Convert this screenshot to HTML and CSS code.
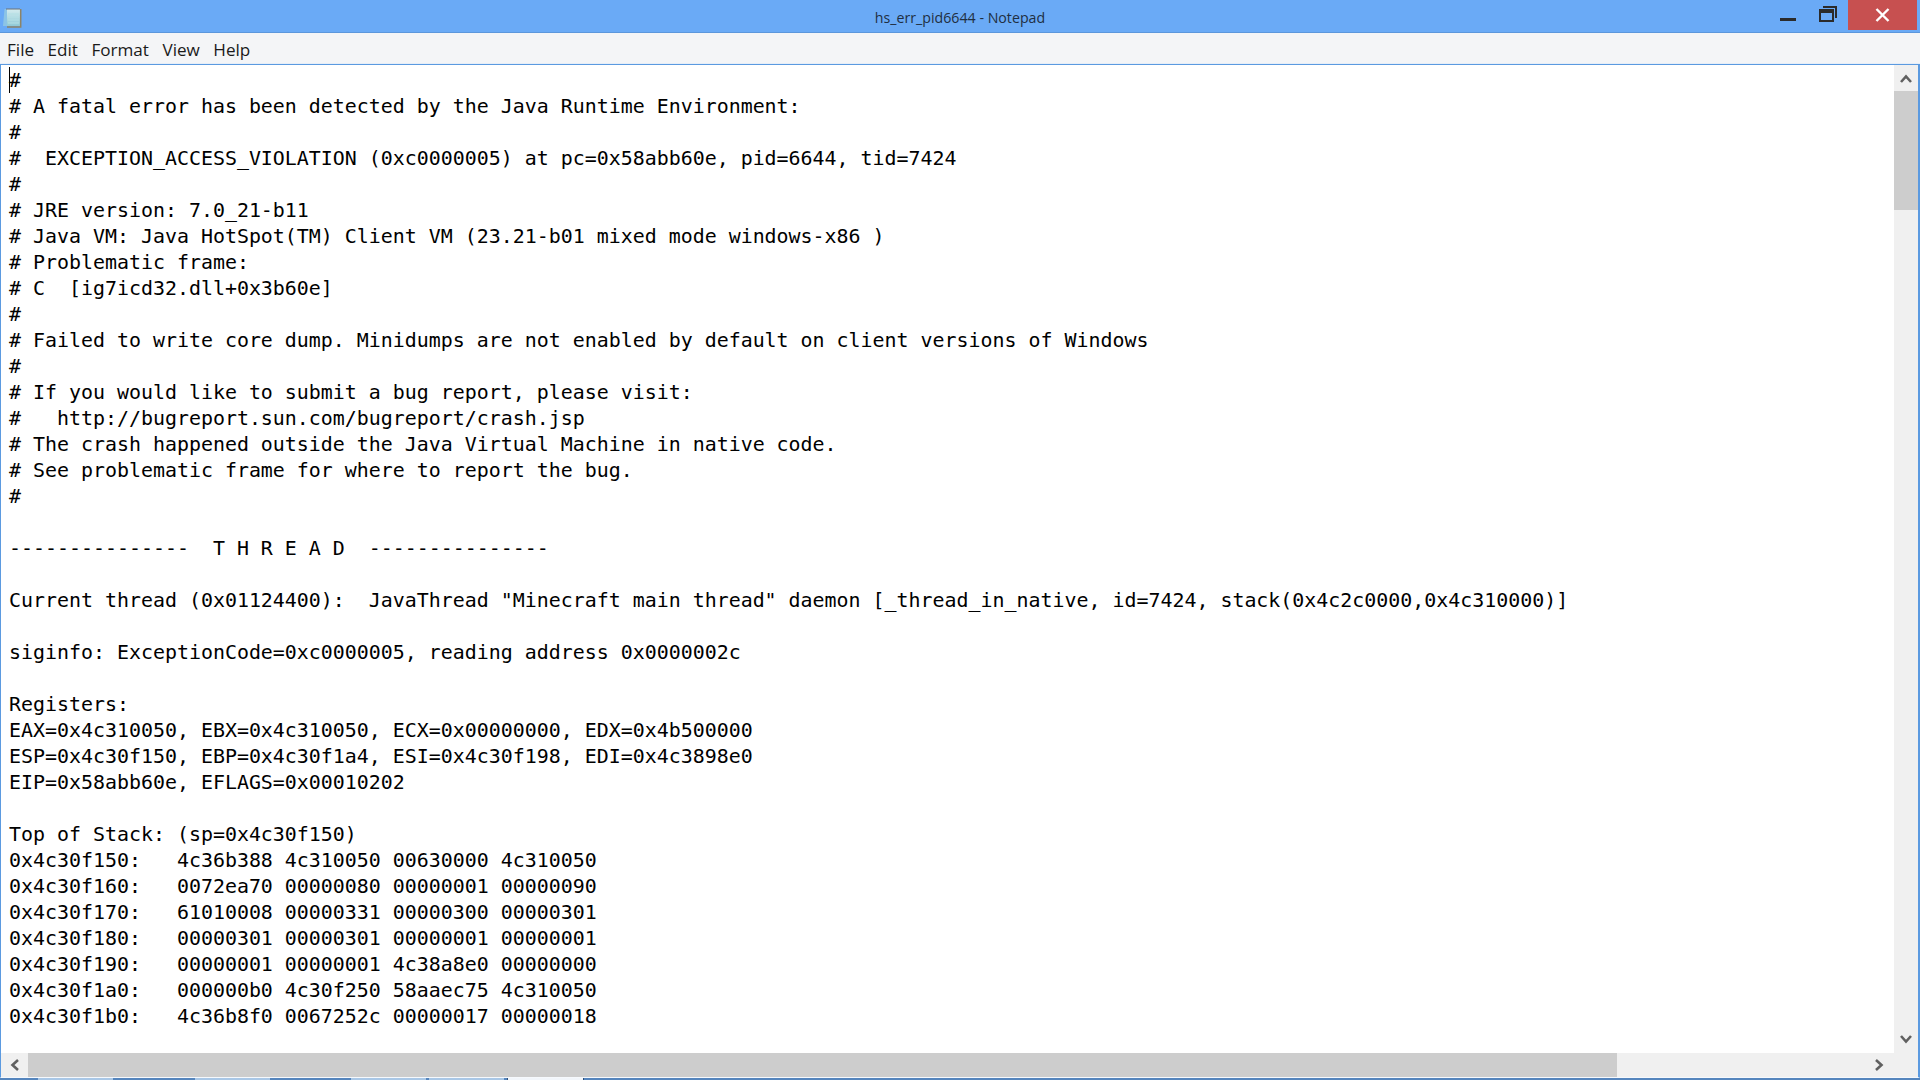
FILE: index.html
```html
<!DOCTYPE html>
<html lang="en">
<head>
<meta charset="utf-8">
<title>hs_err_pid6644 - Notepad</title>
<link rel="stylesheet" href="styles.css">
</head>
<body>
<div class="window">
  <header class="titlebar">
    <svg class="app-icon" width="20" height="21" viewBox="0 0 20 21">
      <defs>
        <linearGradient id="paper" x1="0" y1="0" x2="0" y2="1">
          <stop offset="0" stop-color="#d5ecef"/>
          <stop offset="1" stop-color="#8fc9d6"/>
        </linearGradient>
      </defs>
      <path d="M4 2H1.500L0 19h4z" fill="#8cc4e6"/>
      <rect x="4" y="2" width="13" height="17" fill="url(#paper)"/>
      <path d="M5 7h11M5 10h11M5 13h11M5 16h11" stroke="#b4dfe4" stroke-width="1"/>
      <path d="M4 1v2M6 1v2M8 1v2M10 1v2M12 1v2M14 1v2M16 1v2" stroke="#6d7378" stroke-width="1"/>
      <path d="M17.700 2v18H4" fill="none" stroke="#8d8467" stroke-width="1.500"/>
    </svg>
    <div class="title">hs_err_pid6644 - Notepad</div>
    <div class="controls">
      <button class="ctl ctl-min"><svg width="16" height="3" viewBox="0 0 16 3"><rect width="16" height="3" fill="#2b2b2b"/></svg></button>
      <button class="ctl ctl-max"><svg width="18" height="16" viewBox="0 0 18 16"><path d="M4 1h13v11" fill="none" stroke="#2b2b2b" stroke-width="2"/><rect x="1" y="4" width="13" height="11" fill="none" stroke="#2b2b2b" stroke-width="2"/><rect x="1" y="4" width="13" height="3" fill="#2b2b2b"/></svg></button>
      <button class="ctl ctl-close"><svg width="15" height="14" viewBox="0 0 15 14"><path d="M1.500 1l12 12M13.500 1l-12 12" stroke="#fff" stroke-width="2.400"/></svg></button>
    </div>
  </header>
  <nav class="menubar">
    <span class="menu-item">File</span>
    <span class="menu-item">Edit</span>
    <span class="menu-item">Format</span>
    <span class="menu-item">View</span>
    <span class="menu-item">Help</span>
  </nav>
  <div class="client">
    <div class="editor">
      <div class="viewport">
        <span class="caret"></span>
        <pre class="text">#
# A fatal error has been detected by the Java Runtime Environment:
#
#  EXCEPTION_ACCESS_VIOLATION (0xc0000005) at pc=0x58abb60e, pid=6644, tid=7424
#
# JRE version: 7.0_21-b11
# Java VM: Java HotSpot(TM) Client VM (23.21-b01 mixed mode windows-x86 )
# Problematic frame:
# C  [ig7icd32.dll+0x3b60e]
#
# Failed to write core dump. Minidumps are not enabled by default on client versions of Windows
#
# If you would like to submit a bug report, please visit:
#   http://bugreport.sun.com/bugreport/crash.jsp
# The crash happened outside the Java Virtual Machine in native code.
# See problematic frame for where to report the bug.
#

---------------  T H R E A D  ---------------

Current thread (0x01124400):  JavaThread "Minecraft main thread" daemon [_thread_in_native, id=7424, stack(0x4c2c0000,0x4c310000)]

siginfo: ExceptionCode=0xc0000005, reading address 0x0000002c

Registers:
EAX=0x4c310050, EBX=0x4c310050, ECX=0x00000000, EDX=0x4b500000
ESP=0x4c30f150, EBP=0x4c30f1a4, ESI=0x4c30f198, EDI=0x4c3898e0
EIP=0x58abb60e, EFLAGS=0x00010202

Top of Stack: (sp=0x4c30f150)
0x4c30f150:   4c36b388 4c310050 00630000 4c310050
0x4c30f160:   0072ea70 00000080 00000001 00000090
0x4c30f170:   61010008 00000331 00000300 00000301
0x4c30f180:   00000301 00000301 00000001 00000001
0x4c30f190:   00000001 00000001 4c38a8e0 00000000
0x4c30f1a0:   000000b0 4c30f250 58aaec75 4c310050
0x4c30f1b0:   4c36b8f0 0067252c 00000017 00000018</pre>
      </div>
      <div class="vscroll">
        <div class="sb-btn"><svg width="12" height="9" viewBox="0 0 12 9"><path d="M1 8l5-5.500L11 8" fill="none" stroke="#606060" stroke-width="2.600"/></svg></div>
        <div class="vthumb"></div>
        <div class="sb-fill"></div>
        <div class="sb-btn sb-btn-down"><svg width="12" height="9" viewBox="0 0 12 9"><path d="M1 1l5 5.500L11 1" fill="none" stroke="#606060" stroke-width="2.600"/></svg></div>
      </div>
    </div>
    <div class="hscroll">
      <div class="sb-btn-h"><svg width="9" height="12" viewBox="0 0 9 12"><path d="M8 1L2.500 6 8 11" fill="none" stroke="#606060" stroke-width="2.600"/></svg></div>
      <div class="hthumb"></div>
      <div class="sb-fill"></div>
      <div class="sb-btn-h sb-btn-right"><svg width="9" height="12" viewBox="0 0 9 12"><path d="M1 1l5.500 5L1 11" fill="none" stroke="#606060" stroke-width="2.600"/></svg></div>
      <div class="corner"></div>
    </div>
  </div>
  <div class="taskstrip">
    <span class="task task-a"></span>
    <span class="task task-b"></span>
    <span class="task task-c"></span>
    <span class="task task-d"></span>
    <span class="task task-active"></span>
  </div>
</div>
</body>
</html>
```
FILE: styles.css
```css
* { box-sizing: border-box; }
html, body { margin: 0; padding: 0; height: 100%; overflow: hidden; }
body { background: #6aaaf5; font-family: "Open Sans", "Liberation Sans", sans-serif; }
.window { display: flex; flex-direction: column; width: 1920px; height: 1080px; }
.titlebar { position: relative; display: flex; align-items: flex-start; height: 33px; flex: none; background: #6aaaf6; border-bottom: 1px solid #5c97dc; padding: 7px 0 0 3px; }
.app-icon { flex: none; }
.title { position: absolute; left: 0; right: 0; top: 8px; text-align: center; font: 14.200px/20px "Open Sans", sans-serif; color: #1f2f42; }
.controls { position: absolute; top: 0; right: 3px; display: flex; }
.ctl { display: flex; justify-content: center; border: 0; padding: 0; background: transparent; height: 30px; }
.ctl-min { width: 40px; padding-top: 18px; }
.ctl-max { width: 40px; padding-top: 6px; }
.ctl-close { width: 69px; background: #c75050; align-items: center; }
.menubar { display: flex; align-items: center; gap: 13.500px; height: 31px; flex: none; padding: 4px 0 0 7px; background: #f4f5f7; border-bottom: 1px solid #e6eef8; font: 17.100px/22px "Open Sans", sans-serif; color: #1a1a1a; }
.client { flex: 1; min-height: 0; display: flex; flex-direction: column; border: 1px solid #5b9ae0; border-width: 1px 2px 1px 1px; background: #fff; border-bottom-color: #f6f9fd; }
.editor { flex: 1; min-height: 0; display: flex; }
.viewport { position: relative; flex: 1; min-width: 0; overflow: hidden; padding: 3px 0 0 8px; background: #fff; }
.text { margin: 0; font-family: "DejaVu Sans Mono", monospace; font-size: 19.930px; line-height: 26px; color: #000; white-space: pre; }
.caret { position: absolute; left: 8px; top: 2px; width: 1px; height: 26px; background: #000; }
.vscroll { flex: none; width: 24px; display: flex; flex-direction: column; background: #f0f0f0; }
.sb-btn { flex: none; height: 26px; display: flex; align-items: center; justify-content: center; }
.sb-btn-down { margin-bottom: 1px; }
.vthumb { flex: none; height: 119px; background: #cdcdcd; }
.sb-fill { flex: 1; min-width: 0; min-height: 0; }
.hscroll { flex: none; height: 24px; display: flex; background: #f0f0f0; }
.sb-btn-h { flex: none; width: 27px; display: flex; align-items: center; justify-content: center; }
.sb-btn-right { padding-right: 2px; }
.hthumb { flex: none; width: 1589px; background: #cdcdcd; }
.corner { flex: none; width: 24px; }
.taskstrip { flex: none; height: 2px; display: flex; background: #5585bd; }
.task { flex: none; width: 75px; background: #a9c7e6; }
.task-a { margin-left: 38px; }
.task-b { margin-left: 82px; }
.task-c { margin-left: 81px; }
.task-d { margin-left: 3px; }
.task-active { margin-left: 3px; width: 77px; background: #f2f6fb; border: solid #2f4f78; border-width: 0 1px; }
```
